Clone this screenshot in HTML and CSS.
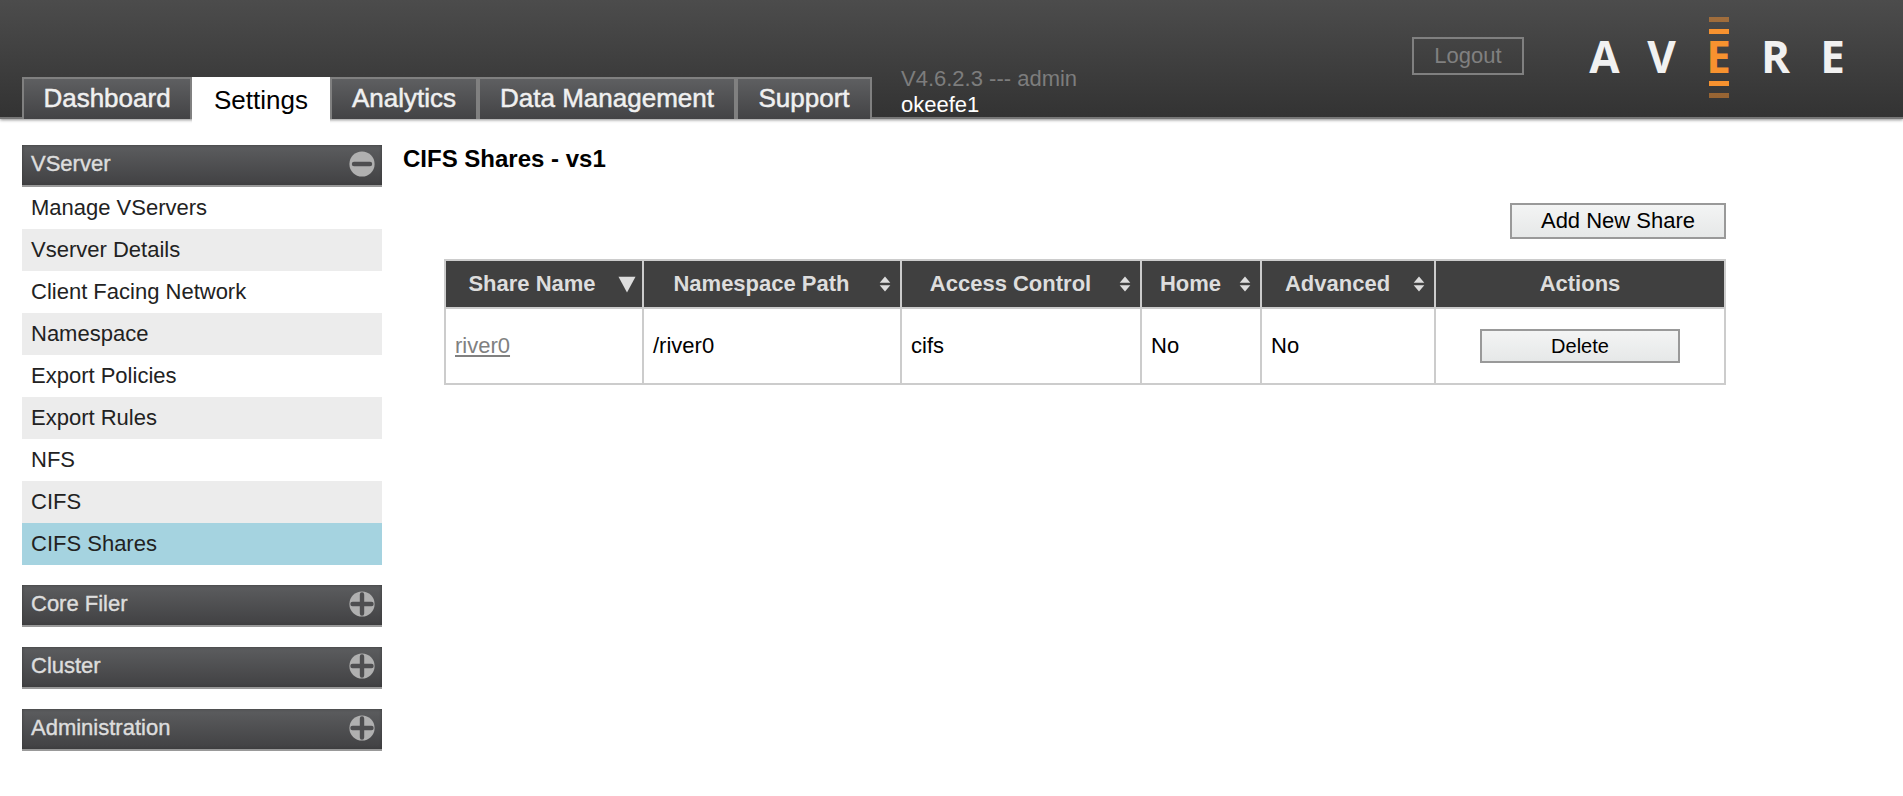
FILE: index.html
```html
<!DOCTYPE html>
<html lang="en">
<head>
<meta charset="utf-8">
<title>CIFS Shares - vs1</title>
<link rel="stylesheet" href="styles.css">
</head>
<body>
<svg width="0" height="0" class="defs">
  <defs>
    <symbol id="plus" viewBox="0 0 26 26"><circle cx="13" cy="13" r="12.6" fill="#b0b0b0"/><path d="M13 3.5v19M3.5 13h19" stroke="#4e4e50" stroke-width="4.4" stroke-linecap="round"/></symbol>
    <symbol id="minus" viewBox="0 0 26 26"><circle cx="13" cy="13" r="12.6" fill="#b0b0b0"/><path d="M5 13h16" stroke="#4e4e50" stroke-width="4.4" stroke-linecap="round"/></symbol>
    <symbol id="both" viewBox="0 0 12 16"><path d="M6 .5L11.3 6.7H.7zM6 15.5L11.3 9.3H.7z" fill="#ddd"/></symbol>
    <symbol id="down" viewBox="0 0 18 17"><path d="M.5 .8h17L9 16.5z" fill="#ddd"/></symbol>
  </defs>
</svg>
<header class="top">
  <nav class="tabs">
    <a class="tab dashboard">Dashboard</a>
    <a class="tab active">Settings</a>
    <a class="tab analytics">Analytics</a>
    <a class="tab data">Data Management</a>
    <a class="tab support">Support</a>
  </nav>
  <div class="info"><div class="version">V4.6.2.3 --- admin</div><div class="host">okeefe1</div></div>
  <button class="logout">Logout</button>
  <div class="logo">
    <span>A</span><span>V</span>
    <div class="beam"><i class="bar dim"></i><i class="bar"></i><span>E</span><i class="bar"></i><i class="bar dim"></i></div>
    <span>R</span><span>E</span>
  </div>
</header>
<main class="page">
  <aside class="side">
    <section class="group">
      <h2 class="head">VServer<svg class="toggle"><use href="#minus"/></svg></h2>
      <ul class="items">
        <li>Manage VServers</li>
        <li>Vserver Details</li>
        <li>Client Facing Network</li>
        <li>Namespace</li>
        <li>Export Policies</li>
        <li>Export Rules</li>
        <li>NFS</li>
        <li>CIFS</li>
        <li class="current">CIFS Shares</li>
      </ul>
    </section>
    <section class="group"><h2 class="head">Core Filer<svg class="toggle"><use href="#plus"/></svg></h2></section>
    <section class="group"><h2 class="head">Cluster<svg class="toggle"><use href="#plus"/></svg></h2></section>
    <section class="group"><h2 class="head">Administration<svg class="toggle"><use href="#plus"/></svg></h2></section>
  </aside>
  <div class="content">
    <h1 class="title">CIFS Shares - vs1</h1>
    <div class="shares">
      <button class="btn add">Add New Share</button>
      <table class="grid">
        <colgroup><col class="c-share"><col class="c-path"><col class="c-access"><col class="c-home"><col class="c-adv"><col class="c-act"></colgroup>
        <thead>
          <tr>
            <th><div class="th"><span>Share Name</span><svg class="down"><use href="#down"/></svg></div></th>
            <th><div class="th"><span>Namespace Path</span><svg class="both"><use href="#both"/></svg></div></th>
            <th><div class="th"><span>Access Control</span><svg class="both"><use href="#both"/></svg></div></th>
            <th><div class="th"><span>Home</span><svg class="both"><use href="#both"/></svg></div></th>
            <th><div class="th"><span>Advanced</span><svg class="both"><use href="#both"/></svg></div></th>
            <th><div class="th plain"><span>Actions</span></div></th>
          </tr>
        </thead>
        <tbody>
          <tr>
            <td><a class="link">river0</a></td><td>/river0</td><td>cifs</td><td>No</td><td>No</td>
            <td class="act"><button class="btn delete">Delete</button></td>
          </tr>
        </tbody>
      </table>
    </div>
  </div>
</main>
</body>
</html>
```
FILE: styles.css
```css
* { box-sizing: border-box; }
body { margin: 0; background: #fff; color: #000; font: 22px/26px "Liberation Sans", Arial, sans-serif; }
button { font-family: inherit; margin: 0; padding: 0; }
h1, h2, ul { margin: 0; padding: 0; }
.defs { display: none; }

.top { display: flex; height: 119px; padding: 0 42px 0 22px; background: linear-gradient(#4c4c4c, #333); border-bottom: 2px solid #777; box-shadow: 0 1px 3px rgba(0, 0, 0, .45); }
.tabs { display: flex; height: 42px; margin-top: 77px; }
.tab { height: 42px; border: 2px solid #808080; border-bottom: 0; background: linear-gradient(#5e5f61, #434345); color: #f0f0f0; font-size: 26px; line-height: 39px; text-align: center; -webkit-text-stroke: .5px #f0f0f0; }
.dashboard { width: 170px; }
.analytics { width: 148px; }
.data { width: 258px; }
.support { width: 136px; }
.tab.active { width: 138px; height: 48px; border: 0; background: #fff; color: #000; line-height: 46px; -webkit-text-stroke: 0; }
.info { flex: 1; padding: 66px 0 0 29px; color: #7d7d7d; }
.host { color: #fff; }
.logout { width: 112px; height: 38px; margin: 37px 52px 0 0; border: 2px solid #808080; background: none; color: #808080; font-size: 22px; }

.logo { display: grid; grid-template-columns: repeat(5, 57px); justify-items: center; align-items: start; height: 100px; color: #f1f1f1; font: bold 44px/44px "Open Sans", "Noto Sans", sans-serif; padding-top: 17px; }
.logo > span { padding-top: 17px; }
.beam { display: flex; flex-direction: column; align-items: center; color: #f7922f; }
.beam span { height: 47px; line-height: 44px; }
.bar { width: 20px; height: 5px; margin-bottom: 7px; background: #f7922f; }
.bar.dim { opacity: .5; }
.bar + .bar { margin-bottom: 0; }

.page { display: flex; gap: 21px; padding: 26px 0 0 22px; }
.side { width: 360px; display: flex; flex-direction: column; gap: 20px; }
.head { display: flex; align-items: center; justify-content: space-between; height: 42px; padding: 0 7px 2px 9px; border-bottom: 2px solid #999; background: linear-gradient(#5c5d5f, #414143); box-shadow: inset 0 0 3px #3a3a3a; color: #ddd; font-size: 22px; font-weight: normal; -webkit-text-stroke: .4px #ddd; }
.toggle { width: 26px; height: 26px; }
.items { list-style: none; color: #222; }
.items li { height: 42px; padding-left: 9px; line-height: 42px; }
.items li:nth-child(even) { background: #ececec; }
.items .current { background: #a5d3e0; }

.title { font-size: 24px; line-height: 28px; }
.shares { display: flex; flex-direction: column; align-items: flex-end; gap: 20px; width: 1282px; margin: 30px 0 0 41px; }
.btn { border: 2px solid #999; background: linear-gradient(#f3f4f4, #e6e8e8); color: #000; }
.add { width: 216px; height: 36px; font-size: 22px; }
.delete { display: block; width: 200px; height: 34px; margin: 0 auto; font-size: 20px; }

.grid { width: 1282px; table-layout: fixed; border-collapse: collapse; }
.c-share { width: 198px; }
.c-path { width: 258px; }
.c-access { width: 240px; }
.c-home { width: 120px; }
.c-adv { width: 174px; }
.c-act { width: 290px; }
.grid th, .grid td { border: 2px solid #ccc; padding: 0; }
.grid th { height: 48px; background: #404040; color: #ddd; }
.grid td { height: 76px; padding-left: 9px; }
.grid td.act { padding: 0; }
.th { display: flex; align-items: center; }
.th span { flex: 1; text-align: center; white-space: nowrap; }
.both { width: 12px; height: 16px; margin-right: 9px; }
.down { width: 18px; height: 17px; margin-right: 6px; }
.link { color: #808080; text-decoration: underline; text-decoration-thickness: 2px; text-underline-offset: 2px; }
```
